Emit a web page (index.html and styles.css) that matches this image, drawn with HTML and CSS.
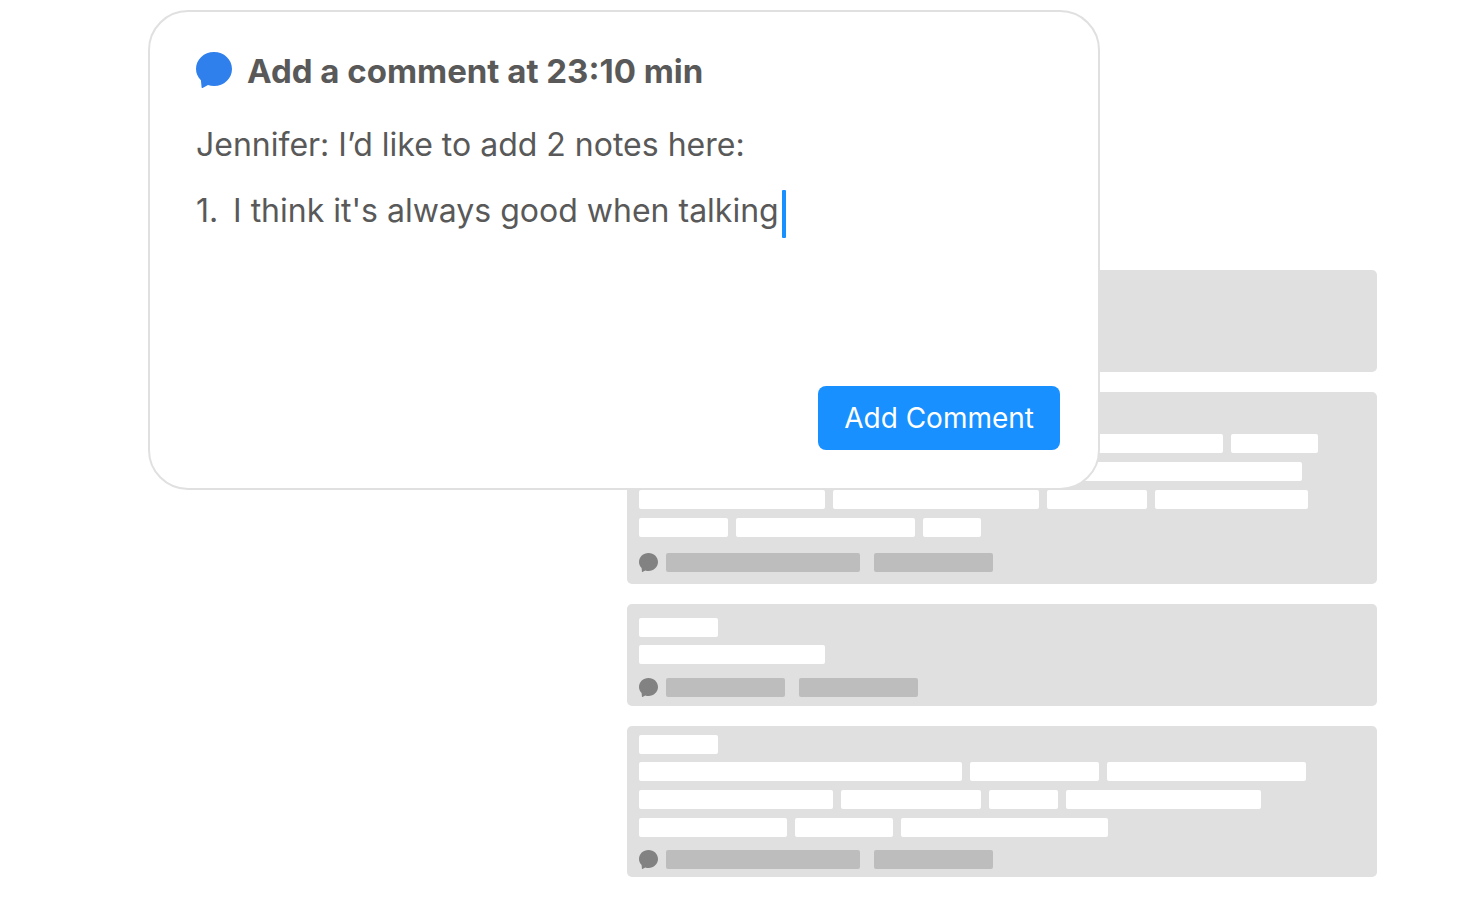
FILE: index.html
```html
<!DOCTYPE html>
<html lang="en">
	<head>
		<meta charset="utf-8">
		<title>Add a comment</title>
		<link rel="stylesheet" href="styles.css">
	</head>
	<body>
		<svg class="sprite" aria-hidden="true">
			<symbol id="bubble" viewBox="0 0 36 36">
				<path d="M18 0C28 0 36 7.500 36 17C36 26.500 28 34 18 34C15.800 34 13.800 33.700 12 33L6.600 36Q5.700 36.300 5.600 35.300L4.900 28.200C1.800 25.300 0 21.300 0 17C0 7.500 8 0 18 0Z"/>
			</symbol>
		</svg>

		<main class="page">
			<div class="feed" aria-hidden="true">
				<div class="card card-empty"></div>

				<div class="card card-tall">
					<div class="row head"><span class="bar" style="width: 79px"></span></div>
					<div class="lines">
						<div class="row"><span class="bar" style="width: 323px"></span><span class="bar" style="width: 253px"></span><span class="bar" style="width: 87px"></span></div>
						<div class="row"><span class="bar" style="width: 195px"></span><span class="bar" style="width: 460px"></span></div>
						<div class="row"><span class="bar" style="width: 186px"></span><span class="bar" style="width: 206px"></span><span class="bar" style="width: 100px"></span><span class="bar" style="width: 153px"></span></div>
						<div class="row"><span class="bar" style="width: 89px"></span><span class="bar" style="width: 179px"></span><span class="bar" style="width: 58px"></span></div>
					</div>
					<div class="row foot">
						<svg class="foot-icon"><use href="#bubble"/></svg>
						<div class="tags"><span class="bar" style="width: 194px"></span><span class="bar" style="width: 119px"></span></div>
					</div>
				</div>

				<div class="card card-short">
					<div class="row head"><span class="bar" style="width: 79px"></span></div>
					<div class="lines">
						<div class="row"><span class="bar" style="width: 186px"></span></div>
					</div>
					<div class="row foot">
						<svg class="foot-icon"><use href="#bubble"/></svg>
						<div class="tags"><span class="bar" style="width: 119px"></span><span class="bar" style="width: 119px"></span></div>
					</div>
				</div>

				<div class="card card-medium">
					<div class="row head"><span class="bar" style="width: 79px"></span></div>
					<div class="lines">
						<div class="row"><span class="bar" style="width: 323px"></span><span class="bar" style="width: 129px"></span><span class="bar" style="width: 199px"></span></div>
						<div class="row"><span class="bar" style="width: 194px"></span><span class="bar" style="width: 140px"></span><span class="bar" style="width: 69px"></span><span class="bar" style="width: 195px"></span></div>
						<div class="row"><span class="bar" style="width: 148px"></span><span class="bar" style="width: 98px"></span><span class="bar" style="width: 207px"></span></div>
					</div>
					<div class="row foot">
						<svg class="foot-icon"><use href="#bubble"/></svg>
						<div class="tags"><span class="bar" style="width: 194px"></span><span class="bar" style="width: 119px"></span></div>
					</div>
				</div>
			</div>

			<form class="dialog">
				<label class="title" for="comment">
					<svg class="title-icon" aria-hidden="true"><use href="#bubble"/></svg>
					Add a comment at 23:10 min
				</label>
				<div class="editor">
					<textarea id="comment" rows="4" spellcheck="false">Jennifer: I’d like to add 2 notes here:
1. &thinsp;I think it's always good when talking</textarea>
					<span class="caret"></span>
				</div>
				<button class="submit" type="button">Add Comment</button>
			</form>
		</main>
	</body>
</html>
```

FILE: styles.css
```css
* {
	box-sizing: border-box;
}

body {
	margin: 0;
	background: #fff;
	color: #595959;
	font-family: Inter, "Liberation Sans", sans-serif;
}

.sprite {
	display: none;
}

/* dialog and feed share the middle column, so the dialog overlaps the feed */
.page {
	display: grid;
	grid-template-columns: 148fr 479fr 473fr 277fr 85fr;
	align-items: start;
}

.feed {
	grid-column: 3 / 5;
	grid-row: 1;
	display: flex;
	flex-direction: column;
	gap: 20px;
	padding: 270px 0 45px;
}

.card {
	padding: 0 12px;
	border-radius: 5px;
	background: #e0e0e0;
}

.card-empty {
	height: 102px;
}

.card-tall {
	padding-top: 15px;
	padding-bottom: 12px;
}

.card-short {
	padding-top: 14px;
	padding-bottom: 9px;
}

.card-medium {
	padding-top: 9px;
	padding-bottom: 8px;
}

.row {
	display: flex;
	gap: 8px;
}

.head {
	margin-bottom: 8px;
}

.lines {
	display: flex;
	flex-direction: column;
	gap: 9px;
	margin-bottom: 14px;
}

.card-tall .lines {
	margin-bottom: 16px;
}

.card-medium .lines {
	margin-bottom: 13px;
}

.bar {
	height: 19px;
	border-radius: 2px;
	background: #fff;
}

.foot-icon {
	width: 19px;
	height: 19px;
	fill: #828282;
}

.tags {
	display: flex;
	gap: 14px;
}

.tags .bar {
	background: #bdbdbd;
}

.dialog {
	grid-column: 2 / 4;
	grid-row: 1;
	display: flex;
	flex-direction: column;
	margin-top: 10px;
	padding: 40px 38px 38px 46px;
	border: 2px solid #e0e0e0;
	border-radius: 40px;
	background: #fff;
	z-index: 1;
}

.title {
	display: flex;
	align-items: flex-start;
	gap: 15px;
	margin-bottom: 22px;
	font-size: 33px;
	font-weight: 700;
	line-height: 38px;
}

.title-icon {
	width: 36px;
	height: 36px;
	fill: #2f80ed;
}

.editor {
	position: relative;
	margin-bottom: 10px;
}

.editor textarea {
	display: block;
	width: 100%;
	padding: 0;
	border: 0;
	outline: 0;
	resize: none;
	background: none;
	color: inherit;
	font-family: inherit;
	font-size: 32px;
	line-height: 66px;
}

.caret {
	position: absolute;
	top: 78px;
	left: 586px;
	width: 4px;
	height: 48px;
	border-radius: 1px;
	background: #1890ff;
}

.submit {
	align-self: flex-end;
	padding: 14px 26px;
	border: 0;
	border-radius: 8px;
	background: #1890ff;
	color: #fff;
	font-family: inherit;
	font-size: 28px;
	line-height: 36px;
}
```
